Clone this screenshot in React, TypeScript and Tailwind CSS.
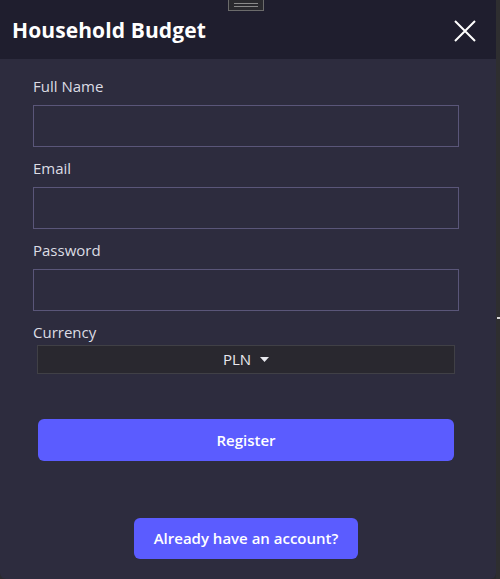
import { useState } from 'react';

const font = { fontFamily: '"Open Sans", "Noto Sans", sans-serif' };

function Field({ label, type = 'text' }: { label: string; type?: string }) {
  const [value, setValue] = useState('');
  return (
    <div className="flex flex-col">
      <label className="text-[15px] leading-[20px] text-[#dcdce4] mb-[9px]">{label}</label>
      <input
        type={type}
        value={value}
        onChange={(e) => setValue(e.target.value)}
        className="h-[42px] w-full border border-[#5a5679] bg-transparent px-2 text-white outline-none"
      />
    </div>
  );
}

export default function App() {
  return (
    <div className="w-[500px] h-[579px] bg-[#2a2a2e] flex overflow-hidden" style={font}>
      <div className="relative w-[496px] h-full bg-[#2d2c3e] rounded-b-[6px] flex flex-col">
        {/* drag handle */}
        <div className="absolute left-[228px] top-[-1px] w-[36px] h-[12px] border border-[#6b6b6b] bg-[#2a2a2e] flex flex-col items-center justify-center gap-[2px]">
          <div className="w-[24px] h-[1px] bg-[#8a8a8a]" />
          <div className="w-[24px] h-[1px] bg-[#8a8a8a]" />
        </div>

        {/* header */}
        <div className="h-[59px] bg-[#1f1e2e] flex items-center justify-between pl-[12px] pr-[20px] pt-[2px]">
          <h1 className="text-[21px] font-bold text-white tracking-[0.1px]">Household Budget</h1>
          <button className="text-white">
            <svg width="22" height="22" viewBox="0 0 22 22" fill="none" stroke="currentColor" strokeWidth="2">
              <path d="M1 1L21 21M21 1L1 21" />
            </svg>
          </button>
        </div>

        {/* form */}
        <div className="flex flex-col pl-[33px] pr-[37px] pt-[17px]">
          <div className="flex flex-col gap-[11px]">
            <Field label="Full Name" />
            <Field label="Email" type="email" />
            <Field label="Password" type="password" />
          </div>
          <div className="flex flex-col mt-[11px]">
            <span className="text-[15px] leading-[20px] text-[#dcdce4]">Currency</span>
            <div className="mt-[3px] mx-[4px] h-[29px] bg-[#29282f] border border-[#404046] flex items-center justify-center gap-[9px] text-[15px] text-[#e8e8ee]">
              <span>PLN</span>
              <svg width="9" height="5" viewBox="0 0 9 5" fill="#e8e8ee">
                <path d="M0 0H9L4.5 5Z" />
              </svg>
            </div>
          </div>
          <button className="mt-[45px] mx-[5px] h-[42px] rounded-[6px] bg-[#5b5cff] text-white font-semibold text-[15px]">
            Register
          </button>
        </div>

        <div className="flex justify-center mt-[57px] pr-[4px]">
          <button className="h-[41px] w-[224px] rounded-[6px] bg-[#5b5cff] text-white font-semibold text-[15px]">
            Already have an account?
          </button>
        </div>
      </div>
      <div className="relative flex-1 bg-[#2e2e30]">
        <div className="absolute top-[317px] left-[1px] w-[3px] h-[2px] bg-[#d8d8d8]" />
      </div>
    </div>
  );
}
